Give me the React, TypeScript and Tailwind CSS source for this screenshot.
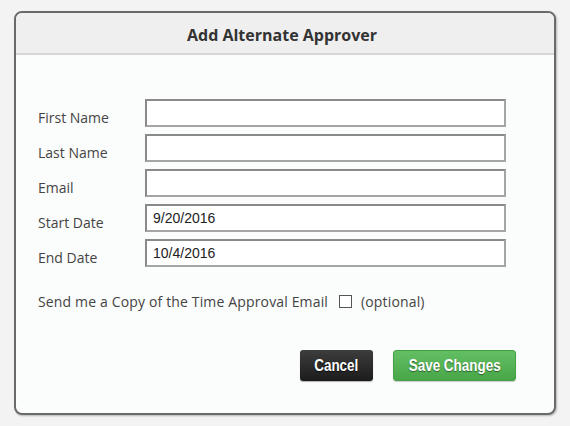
import React from 'react';

const fields = [
  { label: 'First Name', value: '' },
  { label: 'Last Name', value: '' },
  { label: 'Email', value: '' },
  { label: 'Start Date', value: '9/20/2016' },
  { label: 'End Date', value: '10/4/2016' },
];

export default function App() {
  return (
    <div className="w-[570px] h-[426px] bg-[#f3f3f3] pt-[11px] pl-[14px] font-['Open_Sans',sans-serif]">
      <div className="w-[542px] h-[404px] rounded-[8px] border-2 border-[#6a6a6a] bg-[#fbfcfc] overflow-hidden shadow-[1px_1px_2px_rgba(0,0,0,0.25)]">
        <div className="h-[42px] bg-[#efefef] border-b-2 border-[#d6d6d6] flex items-center justify-center pt-[3px]">
          <h1 className="text-[16px] font-bold text-[#333] mr-[6px]">Add Alternate Approver</h1>
        </div>

        <div className="pt-[44px] pl-[22px]">
          <div className="flex flex-col gap-[7px]">
            {fields.map(f => (
              <div key={f.label} className="flex items-center h-[28px]">
                <label className="w-[107px] pt-[8px] text-[14px] text-[#444]">{f.label}</label>
                <input
                  readOnly
                  value={f.value}
                  className="w-[361px] h-[28px] border-2 border-[#a5a5a5] border-t-[#8a8a8a] border-l-[#8a8a8a] bg-white px-[6px] text-[14px] text-[#222] font-['Liberation_Sans',Arial,sans-serif] outline-none"
                />
              </div>
            ))}
          </div>

          <div className="flex items-center mt-[24px] h-[20px] text-[14px] text-[#444] tracking-[0.15px]">
            <span>Send me a Copy of the Time Approval Email</span>
            <span className="ml-[11px] w-[13px] h-[13px] border border-[#555] bg-white" />
            <span className="ml-[9px]">(optional)</span>
          </div>
        </div>

        <div className="flex justify-end gap-[20px] pr-[38px] mt-[39px]">
          <button className="w-[73px] h-[31px] rounded-[3px] bg-gradient-to-b from-[#3d3d3d] to-[#1c1c1c] text-white text-[16px] font-bold font-['Liberation_Sans',Arial,sans-serif] [text-shadow:0_1px_1px_rgba(0,0,0,0.8)] shadow-[0_1px_1px_rgba(0,0,0,0.3)]">
            <span className="inline-block scale-x-[0.84]">Cancel</span>
          </button>
          <button className="w-[123px] h-[31px] rounded-[3px] bg-gradient-to-b from-[#64bf64] to-[#47a647] border border-[#44a044] text-white text-[16px] font-bold font-['Liberation_Sans',Arial,sans-serif] [text-shadow:0_1px_1px_rgba(0,0,0,0.45)] shadow-[0_1px_1px_rgba(0,0,0,0.2)]">
            <span className="inline-block scale-x-[0.84]">Save Changes</span>
          </button>
        </div>
      </div>
    </div>
  );
}
